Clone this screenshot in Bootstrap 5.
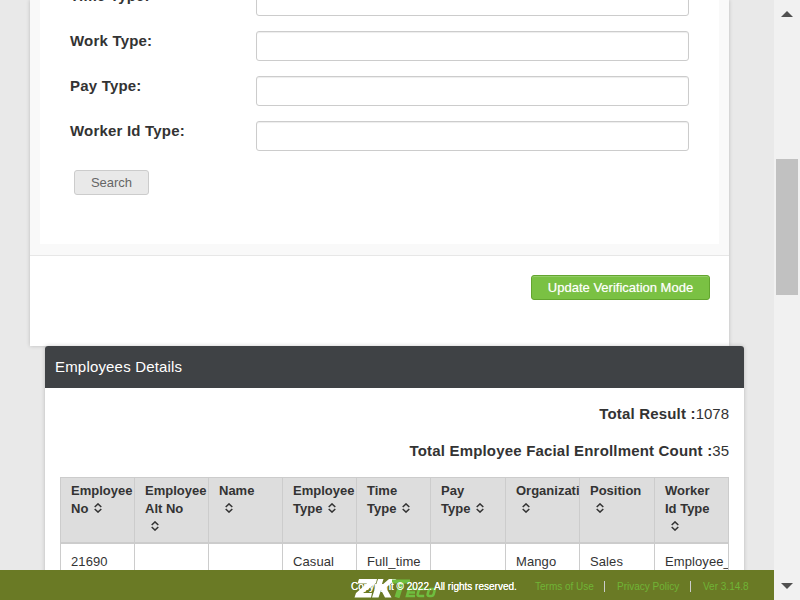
<!DOCTYPE html>
<html lang="en">
<head>
<meta charset="utf-8">
<title>Employees Details</title>
<link href="https://cdn.jsdelivr.net/npm/bootstrap@5.3.0/dist/css/bootstrap.min.css" rel="stylesheet">
<style>
body{font-family:"Liberation Sans",Arial,sans-serif;color:#333;background:#e9e9e9;font-size:13px}
.screen{width:800px;height:600px}
.search-panel{width:699px;height:346px;margin-left:30px;background:#fff;box-shadow:0 0 4px rgba(0,0,0,.2)}
.form-frame{height:256px;background:#f9f9f9;border-bottom:1px solid #e7e7e7;padding:0 10px 11px}
.form-inner{height:244px;background:#fff;padding:0 30px}
.form-rows{margin-top:-14px}
.form-line{height:45px}
.form-line label{width:186px;font-size:15px;font-weight:700;line-height:20px;letter-spacing:.2px}
.form-line .form-control{width:433px;height:30px;min-height:0;border:1px solid #ccc;border-radius:3px;box-shadow:inset 0 1px 1px rgba(0,0,0,.075)}
.btn-search{width:75px;height:25px;margin:4px 0 0 4px;font-size:13px;line-height:23px;color:#666;background:#e9e9e9;border:1px solid #ccc;border-radius:3px}
.update-bar{padding:19px 19px 0 0}
.btn-update{width:179px;height:25px;font-size:13px;font-weight:400;line-height:23px;color:#fff;background:#7ac143;border:1px solid #63a52f;border-radius:3px;box-shadow:inset 0 1px 0 rgba(255,255,255,.2);text-shadow:0 0 1px rgba(255,255,255,.5)}
.details-panel{width:699px;height:260px;margin-left:45px;background:#fff;border-radius:3px 3px 0 0;box-shadow:0 0 4px rgba(0,0,0,.2)}
.details-title{height:42px;padding-left:10px;background:#3f4245;color:#fff;font-size:15px;line-height:41px;letter-spacing:.18px;border-radius:3px 3px 0 0}
.totals{padding-top:15px}
.total{height:37px;font-size:15px;line-height:22px;letter-spacing:.18px;padding-right:15px}
.total span{letter-spacing:0}
.emp-table{width:669px;margin-left:15px;table-layout:fixed;border-collapse:collapse;letter-spacing:.1px}
.emp-table th,.emp-table td{border:1px solid #ccc;padding:4px 0 0 10px;line-height:18px;vertical-align:top;overflow:hidden;white-space:nowrap}
.emp-table th{height:65px;background:#ddd;border-bottom-width:2px;letter-spacing:0}
.emp-table td{padding-top:9px;height:60px}
.c74{width:74px}
.c75{width:75px}
.sorter{width:8px;height:10px;fill:none;stroke:#333;stroke-width:1.5;vertical-align:0;margin-left:2px}
.sorter.alone{margin-left:6px;display:block;margin-top:3px}
.site-footer{height:30px;background:#6a7a25;font-size:10px;line-height:33px}
.copy{left:351px;color:#fff;text-shadow:0 0 .5px #fff}
.brand{left:354px;top:8px}
.links{margin-left:535px;color:#70b435}
.links span+i+span{padding-left:12px}
.links .terms{width:69px}
.links .privacy{width:85px}
.links i{width:1px;height:11px;background:#ccc;margin-top:11px}
.scroller{width:26px;background:#f1f1f1}
.thumb{width:22px;height:136px;background:#c1c1c1;margin:142px 0 0 2px}
.scroller svg{width:12px;height:6px;margin:11px 0 0 7px;fill:#505050;flex:none}
.scroller svg.down{margin:auto 0 11px 7px}
</style>
<script src="https://cdn.jsdelivr.net/npm/bootstrap@5.3.0/dist/js/bootstrap.bundle.min.js"></script>
</head>
<body>
<svg class="d-none"><symbol id="sort" viewBox="0 0 8 10"><path d="M.7 4 4 .9 7.3 4M.7 6 4 9.1 7.3 6"/></symbol></svg>
<div class="screen d-flex overflow-hidden">
  <div class="d-flex flex-column flex-grow-1 overflow-hidden">
    <main class="flex-grow-1 overflow-hidden">
      <section class="search-panel">
        <div class="form-frame"><div class="form-inner overflow-hidden">
          <div class="form-rows">
            <div class="form-line d-flex"><label for="f1">Time Type:</label><input id="f1" class="form-control"></div>
            <div class="form-line d-flex"><label for="f2">Work Type:</label><input id="f2" class="form-control"></div>
            <div class="form-line d-flex"><label for="f3">Pay Type:</label><input id="f3" class="form-control"></div>
            <div class="form-line d-flex"><label for="f4">Worker Id Type:</label><input id="f4" class="form-control"></div>
            <button class="btn btn-search p-0">Search</button>
          </div>
        </div></div>
        <div class="update-bar d-flex justify-content-end"><button class="btn btn-update p-0">Update Verification Mode</button></div>
      </section>
      <section class="details-panel position-relative">
        <div class="details-title">Employees Details</div>
        <div class="totals text-end">
          <div class="total"><b>Total Result :</b><span>1078</span></div>
          <div class="total"><b>Total Employee Facial Enrollment Count :</b><span>35</span></div>
        </div>
        <table class="emp-table">
          <colgroup><col class="c74" span="5"><col class="c75"><col class="c74"><col class="c75"><col></colgroup>
          <thead><tr>
            <th>Employee<br>No <svg class="sorter"><use href="#sort"/></svg></th>
            <th>Employee<br>Alt No<svg class="sorter alone"><use href="#sort"/></svg></th>
            <th>Name<svg class="sorter alone"><use href="#sort"/></svg></th>
            <th>Employee<br>Type <svg class="sorter"><use href="#sort"/></svg></th>
            <th>Time<br>Type <svg class="sorter"><use href="#sort"/></svg></th>
            <th>Pay<br>Type <svg class="sorter"><use href="#sort"/></svg></th>
            <th>Organizati<svg class="sorter alone"><use href="#sort"/></svg></th>
            <th>Position<svg class="sorter alone"><use href="#sort"/></svg></th>
            <th>Worker<br>Id Type<svg class="sorter alone"><use href="#sort"/></svg></th>
          </tr></thead>
          <tbody><tr><td>21690</td><td></td><td></td><td>Casual</td><td>Full_time</td><td></td><td>Mango</td><td>Sales</td><td>Employee_</td></tr></tbody>
        </table>
      </section>
    </main>
    <footer class="site-footer position-relative flex-shrink-0">
      <svg class="brand position-absolute" width="84" height="21" viewBox="0 0 84 21">
        <g fill="#fff"><path d="M5 1h18l-1 4L9 15h9l-1 4.500H.5L2 15 13 5.500H3.500z"/><path d="M24 1h5.500l-2 6.500L35 1h7.500L32 9.500l5.500 10H31l-4-7.500-2.500 7.500H18z"/></g>
        <g fill="none" stroke="#6fbe3f"><path stroke-width="4" d="M38 3.500h18"/><path stroke-width="5" d="m48 4-5 15.500"/><path stroke-width="2.600" d="M63 11h-8l-2 7h8M54 14.500h7M72 11h-5q-2 0-2.500 2l-.8 3q-.4 2 1.500 2h5M76 11h3q2 0 1.500 2l-.8 3q-.5 2-2.500 2h-2q-2 0-1.500-2l.8-3q.5-2 1.500-2z"/></g>
      </svg>
      <span class="copy position-absolute text-nowrap">Copyright © 2022. All rights reserved.</span>
      <div class="links d-flex text-nowrap"><span class="terms">Terms of Use</span><i></i><span class="privacy">Privacy Policy</span><i></i><span>Ver 3.14.8</span></div>
    </footer>
  </div>
  <div class="scroller d-flex flex-column flex-shrink-0">
    <svg viewBox="0 0 12 6"><path d="M0 6 6 0l6 6z"/></svg>
    <div class="thumb"></div>
    <svg class="down" viewBox="0 0 12 6"><path d="M0 0h12L6 6z"/></svg>
  </div>
</div>
</body>
</html>
